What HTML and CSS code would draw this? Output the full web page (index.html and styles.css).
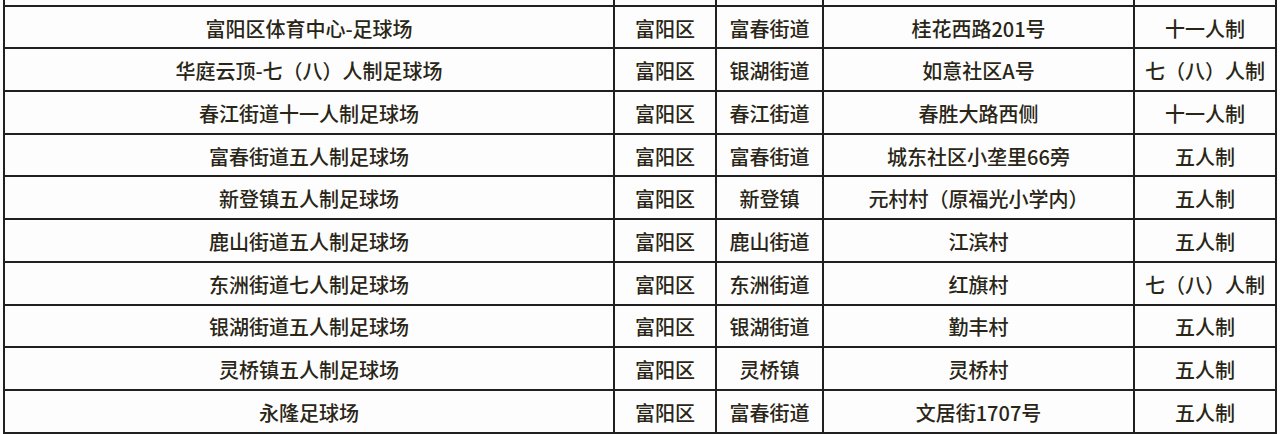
FILE: index.html
```html
<!DOCTYPE html>
<html lang="zh">
<head>
<meta charset="utf-8">
<link rel="stylesheet" href="styles.css">
</head>
<body>
<div class="frame">
<table class="venues">
<colgroup>
<col class="c-name"><col class="c-dist"><col class="c-street"><col class="c-addr"><col class="c-type">
</colgroup>
<tbody>
<tr class="cut"><td></td><td></td><td></td><td></td><td></td></tr>
<tr><td>富阳区体育中心-足球场</td><td>富阳区</td><td>富春街道</td><td>桂花西路201号</td><td>十一人制</td></tr>
<tr><td>华庭云顶-七（八）人制足球场</td><td>富阳区</td><td>银湖街道</td><td>如意社区A号</td><td>七（八）人制</td></tr>
<tr><td>春江街道十一人制足球场</td><td>富阳区</td><td>春江街道</td><td>春胜大路西侧</td><td>十一人制</td></tr>
<tr><td>富春街道五人制足球场</td><td>富阳区</td><td>富春街道</td><td>城东社区小垄里66旁</td><td>五人制</td></tr>
<tr><td>新登镇五人制足球场</td><td>富阳区</td><td>新登镇</td><td>元村村（原福光小学内）</td><td>五人制</td></tr>
<tr><td>鹿山街道五人制足球场</td><td>富阳区</td><td>鹿山街道</td><td>江滨村</td><td>五人制</td></tr>
<tr><td>东洲街道七人制足球场</td><td>富阳区</td><td>东洲街道</td><td>红旗村</td><td>七（八）人制</td></tr>
<tr><td>银湖街道五人制足球场</td><td>富阳区</td><td>银湖街道</td><td>勤丰村</td><td>五人制</td></tr>
<tr><td>灵桥镇五人制足球场</td><td>富阳区</td><td>灵桥镇</td><td>灵桥村</td><td>五人制</td></tr>
<tr><td>永隆足球场</td><td>富阳区</td><td>富春街道</td><td>文居街1707号</td><td>五人制</td></tr>
</tbody>
</table>
</div>
</body>
</html>
```
FILE: styles.css
```css
html, body {
  margin: 0;
  padding: 0;
  background: #fdfdfd;
}
.frame {
  width: 1280px;
  height: 434px;
  overflow: hidden;
}
.venues {
  border-collapse: collapse;
  table-layout: fixed;
  width: 1272px;
  margin: -38px 0 0 3px;
  font-family: "Noto Sans CJK SC", "Noto Sans", sans-serif;
  font-size: 20px;
  font-weight: 500;
  color: #2a2617;
}
.c-name { width: 610px; }
.c-dist { width: 102px; }
.c-street { width: 107px; }
.c-addr { width: 311px; }
.c-type { width: 142px; }
.venues tr { height: 42.7px; }
.venues td {
  border: 2px solid #202020;
  padding: 0;
  text-align: center;
  vertical-align: middle;
  line-height: 1;
  white-space: nowrap;
  padding-top: 3px;
}
```
